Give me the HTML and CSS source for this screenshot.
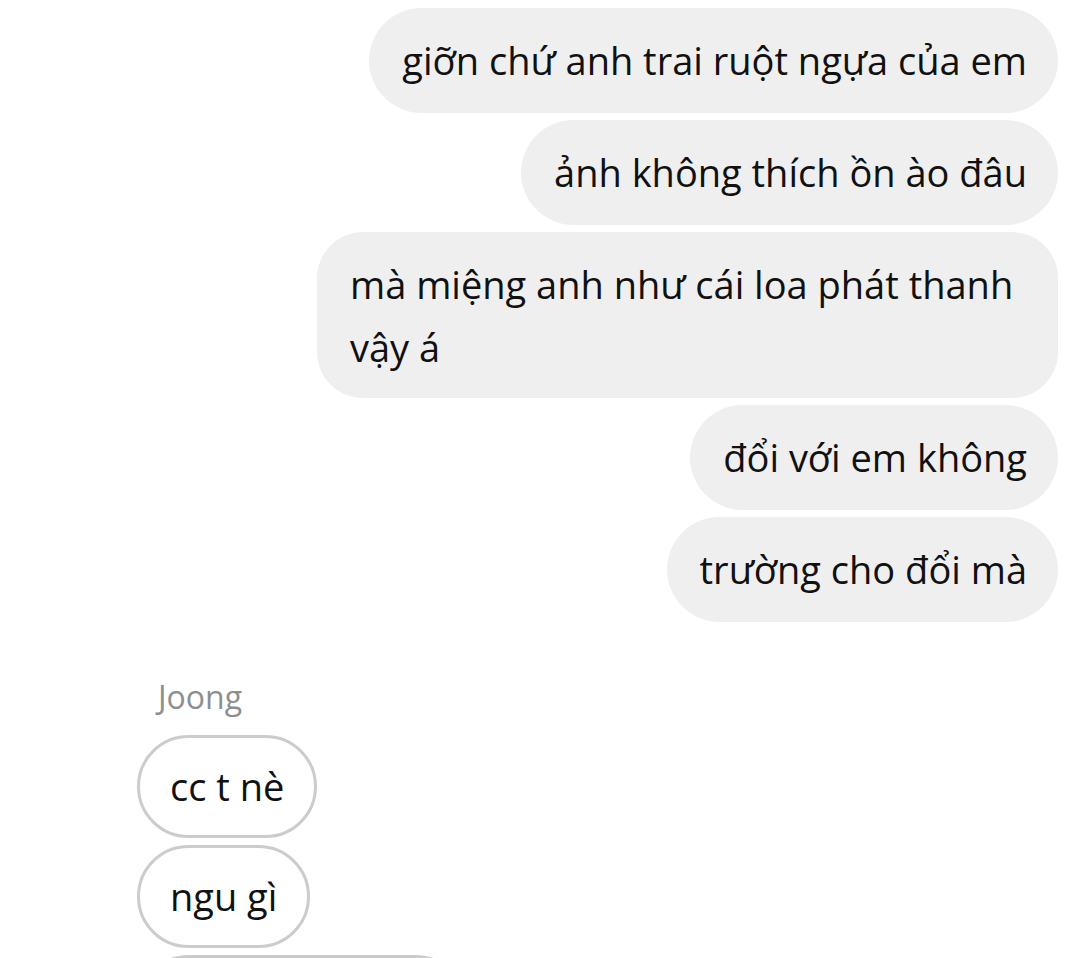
FILE: index.html
```html
<!DOCTYPE html>
<html lang="vi">
<head>
<meta charset="utf-8">
<title>Chat</title>
<link rel="stylesheet" href="styles.css">
</head>
<body>
<div class="thread">
  <div class="group group-out">
    <div class="bubble out">giỡn chứ anh trai ruột ngựa của em</div>
    <div class="bubble out">ảnh không thích ồn ào đâu</div>
    <div class="bubble out multi">mà miệng anh như cái loa phát thanh vậy á</div>
    <div class="bubble out">đổi với em không</div>
    <div class="bubble out">trường cho đổi mà</div>
  </div>
  <div class="group group-in">
    <div class="sender">Joong</div>
    <div class="bubble in">cc t nè</div>
    <div class="bubble in">ngu gì</div>
    <div class="bubble in wide">&nbsp;</div>
  </div>
</div>
</body>
</html>
```
FILE: styles.css
```css
html, body {
  margin: 0;
  padding: 0;
  background: #ffffff;
  overflow: hidden;
}
body {
  font-family: "Open Sans", "Noto Sans", sans-serif;
  color: #111111;
}
.thread {
  display: flex;
  flex-direction: column;
  padding: 8px 22px 0 137px;
}
.group {
  display: flex;
  flex-direction: column;
  gap: 7px;
}
.group-out {
  align-items: flex-end;
}
.group-in {
  align-items: flex-start;
  margin-top: 54px;
}
.bubble {
  font-size: 38px;
  line-height: 63px;
  padding: 21px 31px 21px 33px;
  border-radius: 53px;
  box-sizing: border-box;
}
.out {
  background: #efefef;
}
.multi {
  max-width: 741px;
  border-radius: 46px;
  padding-bottom: 19px;
}
.in {
  border: 3px solid #cccccc;
  padding: 17px 30px 18px;
  line-height: 62px;
}
.wide {
  width: 330px;
}
.sender {
  font-size: 32px;
  line-height: 42px;
  color: #8e8e8e;
  padding-left: 21px;
  margin-bottom: 10px;
}
```
